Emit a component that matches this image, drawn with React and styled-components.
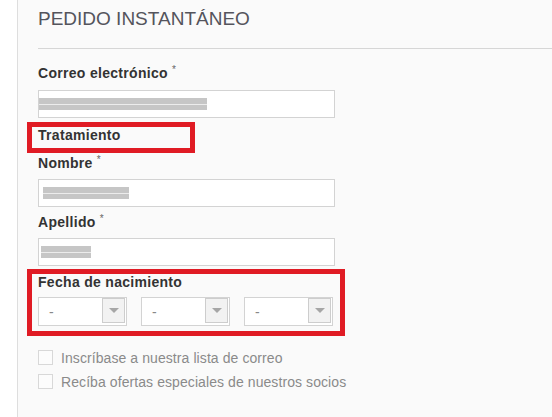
import React from "react";
import styled, { createGlobalStyle } from "styled-components";

const GlobalStyle = createGlobalStyle`
  body {
    margin: 0;
    background: #fff;
    font-family: "Liberation Sans", Arial, sans-serif;
  }
`;

export default function App() {
  return (
    <Page>
      <GlobalStyle />
      <Panel>
        <Header>PEDIDO INSTANTÁNEO</Header>
        <Form>
          <Label>
            Correo electrónico<Req>*</Req>
          </Label>
          <InputBox>
            <Redacted $w={168} $inset={0} />
          </InputBox>

          <Highlight $w={168} $top={4}>
            <Label $mb={0}>Tratamiento</Label>
          </Highlight>

          <Label $mt={2} $mb={8}>
            Nombre<Req>*</Req>
          </Label>
          <InputBox>
            <Redacted $w={86} $inset={4} />
          </InputBox>

          <Label $mt={7} $mb={8}>
            Apellido<Req>*</Req>
          </Label>
          <InputBox>
            <Redacted $w={50} $inset={2} />
          </InputBox>

          <Highlight $w={318} $top={3}>
            <Label $mb={7}>Fecha de nacimiento</Label>
            <DateRow>
              {[0, 1, 2].map((i) => (
                <Select key={i}>
                  <SelectValue>-</SelectValue>
                  <ArrowBox>
                    <Caret />
                  </ArrowBox>
                </Select>
              ))}
            </DateRow>
          </Highlight>

          <Checks>
            <CheckRow>
              <Box />
              <CheckText>Inscríbase a nuestra lista de correo</CheckText>
            </CheckRow>
            <CheckRow>
              <Box />
              <CheckText>Recíba ofertas especiales de nuestros socios</CheckText>
            </CheckRow>
          </Checks>
        </Form>
      </Panel>
    </Page>
  );
}

const Page = styled.div`
  padding-left: 17px;
  min-height: 417px;
  box-sizing: border-box;
`;

const Panel = styled.div`
  border-left: 1px solid #dedede;
  background: #fafafa;
  min-height: 417px;
  padding-left: 20px;
  box-sizing: border-box;
`;

const Header = styled.div`
  font-size: 19px;
  line-height: 22px;
  color: #54545c;
  padding: 8px 0 18px;
  border-bottom: 1px solid #d6d6d6;
`;

const Form = styled.div`
  padding-top: 16px;
  display: flex;
  flex-direction: column;
  align-items: flex-start;
`;

const Label = styled.div`
  font-size: 14px;
  line-height: 16px;
  font-weight: bold;
  letter-spacing: 0.3px;
  color: #333;
  margin-top: ${(p) => p.$mt || 0}px;
  margin-bottom: ${(p) => (p.$mb === undefined ? 9 : p.$mb)}px;
`;

const Req = styled.span`
  font-size: 10px;
  font-weight: normal;
  color: #666;
  vertical-align: top;
  line-height: 10px;
  margin-left: 4px;
`;

const InputBox = styled.div`
  width: 297px;
  height: 28px;
  box-sizing: border-box;
  border: 1px solid #d3d3d3;
  background: #fff;
  display: flex;
  align-items: center;
`;

const Redacted = styled.span`
  display: block;
  width: ${(p) => p.$w}px;
  height: 12px;
  margin-left: ${(p) => p.$inset}px;
  background: linear-gradient(
    to bottom,
    #c6c6c6 0,
    #c6c6c6 6px,
    #ececec 6px,
    #ececec 7px,
    #c6c6c6 7px
  );
`;

const Highlight = styled.div`
  width: ${(p) => p.$w}px;
  box-sizing: border-box;
  border: 5px solid #e01b24;
  margin-left: -11px;
  margin-top: ${(p) => p.$top}px;
  padding: 0 6px 5px;
`;

const DateRow = styled.div`
  display: flex;
  gap: 14px;
`;

const Select = styled.div`
  width: 89px;
  height: 29px;
  box-sizing: border-box;
  border: 1px solid #d3d3d3;
  background: #fff;
  display: flex;
  align-items: stretch;
`;

const SelectValue = styled.span`
  flex: 1;
  font-size: 14px;
  color: #888;
  padding-left: 10px;
  display: flex;
  align-items: center;
`;

const ArrowBox = styled.span`
  width: 23px;
  margin: 0 1px 2px 0;
  box-sizing: border-box;
  border: 1px solid #cdcdcd;
  background: #f2f2f2;
  display: flex;
  align-items: center;
  justify-content: center;
`;

const Caret = styled.span`
  width: 0;
  height: 0;
  border-left: 5px solid transparent;
  border-right: 5px solid transparent;
  border-top: 5px solid #a6a6a6;
`;

const Checks = styled.div`
  margin-top: 14px;
  display: flex;
  flex-direction: column;
  gap: 9px;
`;

const CheckRow = styled.label`
  display: flex;
  align-items: center;
  height: 15px;
`;

const Box = styled.span`
  width: 15px;
  height: 15px;
  box-sizing: border-box;
  border: 1px solid #d8d8d8;
  background: #fcfcfc;
`;

const CheckText = styled.span`
  font-size: 14px;
  line-height: 16px;
  letter-spacing: 0.08px;
  color: #8a8a8a;
  margin-left: 8px;
`;
